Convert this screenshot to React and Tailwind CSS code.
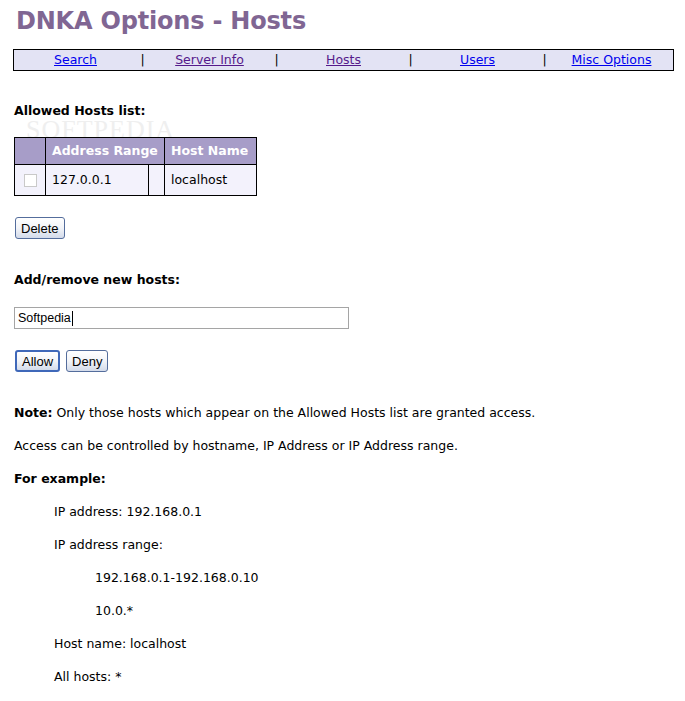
import React from "react";

const body = { fontFamily: '"DejaVu Sans", Verdana, sans-serif' };
const ctrl = { fontFamily: '"Liberation Sans", Arial, sans-serif' };

const navItems = [
  { label: "Search", visited: false },
  { label: "Server Info", visited: true },
  { label: "Hosts", visited: true },
  { label: "Users", visited: false },
  { label: "Misc Options", visited: false },
];

function XpButton({ children, focused }) {
  return (
    <button
      style={ctrl}
      className={
        "h-[22px] px-[5px] rounded-[3px] bg-gradient-to-b from-white via-[#f2f4f8] to-[#d3dbea] text-[13px] text-black leading-none " +
        (focused ? "border-2 border-[#3f68b9]" : "border border-[#546d9c]")
      }
    >
      {children}
    </button>
  );
}

export default function App() {
  return (
    <div style={body} className="relative bg-white text-black min-h-[701px] w-[685px] pl-[14px] pr-[11px] text-[12.5px]">
      <h1 className="pt-[6px] text-[24px] leading-[30px] font-bold text-[#806693] pl-[2px] tracking-[-0.2px]">
        DNKA Options - Hosts
      </h1>

      <div className="mt-[13px] -ml-[1px] h-[22px] border border-black bg-[#e3e3f4] flex justify-center items-center">
        {navItems.map((n, i) => (
          <React.Fragment key={n.label}>
            {i > 0 && <span className="w-[67px] text-center">|</span>}
            <a
              href="#"
              className={
                "w-[67px] text-center underline whitespace-nowrap flex justify-center " +
                (n.visited ? "text-[#551a8b]" : "text-[#0000ee]")
              }
            >
              {n.label}
            </a>
          </React.Fragment>
        ))}
      </div>

      <div className="mt-[32px] leading-[16px] font-bold">Allowed Hosts list:</div>

      {/* watermark */}
      <div
        className="absolute left-[26px] top-[122px] text-[26px] leading-[15px] text-[#efefef] tracking-[1px] pointer-events-none"
        style={{ fontFamily: '"Liberation Serif", serif' }}
      >
        SOFTPEDIA
      </div>

      <table className="relative mt-[18px] border-collapse border border-black text-[12.5px]">
        <thead>
          <tr className="h-[27px] bg-[#a79dc8] text-white font-bold">
            <th className="w-[31px] border border-black p-0"></th>
            <th colSpan={2} className="border border-black px-[6px] text-left whitespace-nowrap font-bold">
              Address Range
            </th>
            <th className="w-[92px] border border-black px-[6px] text-left whitespace-nowrap font-bold">
              Host Name
            </th>
          </tr>
        </thead>
        <tbody>
          <tr className="h-[31px] bg-[#f3f2fc]">
            <td className="border border-black p-0">
              <div className="mx-auto w-[13px] h-[13px] border border-[#c9c9c9] bg-white"></div>
            </td>
            <td className="w-[103px] border border-black px-[6px]">127.0.0.1</td>
            <td className="w-[16px] border border-black p-0"></td>
            <td className="border border-black px-[6px]">localhost</td>
          </tr>
        </tbody>
      </table>

      <div className="mt-[21px] pl-[1px]">
        <XpButton>Delete</XpButton>
      </div>

      <div className="mt-[33px] leading-[16px] font-bold">Add/remove new hosts:</div>

      <div className="mt-[19px]">
        <div
          style={ctrl}
          className="w-[335px] h-[22px] border border-[#a5a5a5] bg-white flex items-center pl-[3px] text-[12.5px]"
        >
          Softpedia<span className="inline-block w-[1px] h-[15px] bg-black ml-[1px]"></span>
        </div>
      </div>

      <div className="mt-[21px] pl-[1px] flex gap-[6px]">
        <XpButton focused>Allow</XpButton>
        <XpButton>Deny</XpButton>
      </div>

      <div className="mt-[33px] leading-[16px]">
        <b>Note:</b> Only those hosts which appear on the Allowed Hosts list are granted access.
      </div>
      <div className="mt-[17px] leading-[16px]">
        Access can be controlled by hostname, IP Address or IP Address range.
      </div>
      <div className="mt-[17px] leading-[16px] font-bold">For example:</div>

      <div className="pl-[40px]">
        <div className="mt-[17px] leading-[16px]">IP address: 192.168.0.1</div>
        <div className="mt-[17px] leading-[16px]">IP address range:</div>
        <div className="pl-[41px]">
          <div className="mt-[17px] leading-[16px]">192.168.0.1-192.168.0.10</div>
          <div className="mt-[17px] leading-[16px]">10.0.*</div>
        </div>
        <div className="mt-[17px] leading-[16px]">Host name: localhost</div>
        <div className="mt-[17px] leading-[16px]">All hosts: *</div>
      </div>
    </div>
  );
}
